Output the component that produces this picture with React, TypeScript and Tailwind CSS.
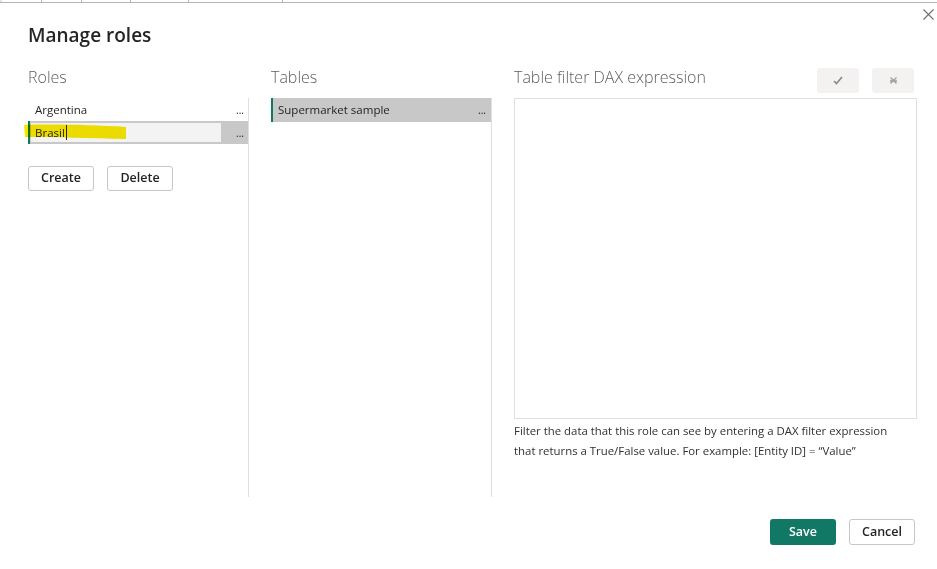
const font = { fontFamily: '"Open Sans", "Noto Sans", sans-serif' }

function Dots() {
  return <span className="text-[10px] leading-none text-[#252423]">...</span>
}

export default function App() {
  return (
    <div style={font} className="relative w-[937px] h-[569px] bg-white overflow-hidden text-[#252423]">
      {/* top strip of the window behind */}
      <div className="flex h-[3px] border-b border-[#b4b4b4] rounded-tl-[4px] border-l">
        <span className="ml-[40px] w-px h-[2px] bg-[#b4b4b4]" />
        <span className="ml-[39px] w-px h-[2px] bg-[#b4b4b4]" />
        <span className="ml-[48px] w-px h-[2px] bg-[#b4b4b4]" />
        <span className="ml-[57px] w-px h-[2px] bg-[#b4b4b4]" />
        <span className="ml-[93px] w-px h-[2px] bg-[#b4b4b4]" />
      </div>

      <button className="absolute top-[9px] right-[3px]">
        <svg width="11" height="11" viewBox="0 0 11 11">
          <path d="M0.5 0.5 L10.5 10.5 M10.5 0.5 L0.5 10.5" stroke="#707070" strokeWidth="1.1" />
        </svg>
      </button>

      <div className="pl-[28px] pr-[20px]">
        <h1 className="mt-[18px] text-[19px] leading-[28px] font-semibold text-[#252423]">Manage roles</h1>

        <div className="mt-[16px] flex">
          {/* Roles */}
          <div className="w-[221px]">
            <div className="h-[28px] text-[16px] leading-[24px] text-[#605e5c] font-light">Roles</div>
            <div className="mt-[5px] h-[399px] border-r border-[#e1dfdd]">
              <div className="h-[23px] flex items-center justify-between pl-[7px] pr-[4px] text-[11.5px]">
                <span>Argentina</span>
                <Dots />
              </div>
              <div className="relative h-[23px] flex items-center justify-between bg-[#c8c8c8] border-l-2 border-[#117865] pl-px pr-[4px] text-[11.5px]">
                <div className="relative w-[190px] h-[19px] bg-[#f3f3f3] flex items-center pl-[4px]">
                  <span className="relative z-10">Brasil</span>
                  <span className="relative z-10 ml-px w-px h-[15px] bg-[#252423]" />
                </div>
                <Dots />
                {/* yellow highlighter annotation */}
                <svg className="absolute left-[-7px] top-[1px] mix-blend-multiply" width="106" height="18" viewBox="0 0 106 18">
                  <path d="M1 3 C 30 2, 70 3, 103 5 L 103 17 C 70 16, 30 15, 2 15 Z" fill="#f7e600" />
                </svg>
              </div>
              <div className="mt-[22px] flex gap-[13px]">
                <button className="w-[66px] h-[25px] bg-white border border-[#c8c6c4] rounded-[3px] text-[12.5px] font-semibold text-[#252423]">Create</button>
                <button className="w-[66px] h-[25px] bg-white border border-[#c8c6c4] rounded-[3px] text-[12.5px] font-semibold text-[#252423]">Delete</button>
              </div>
            </div>
          </div>

          {/* Tables */}
          <div className="ml-[22px] w-[221px]">
            <div className="h-[28px] text-[16px] leading-[24px] text-[#605e5c] font-light">Tables</div>
            <div className="mt-[5px] h-[399px] border-r border-[#e1dfdd]">
              <div className="h-[24px] flex items-center justify-between bg-[#c8c8c8] border-l-2 border-[#117865] pl-[5px] pr-[5px] text-[11.5px]">
                <span>Supermarket sample</span>
                <Dots />
              </div>
            </div>
          </div>

          {/* DAX */}
          <div className="ml-[22px] w-[403px]">
            <div className="h-[28px] flex justify-between">
              <div className="text-[16px] leading-[24px] text-[#605e5c] font-light">Table filter DAX expression</div>
              <div className="mt-[3px] mr-[3px] flex gap-[13px]">
                <button className="w-[42px] h-[25px] bg-[#f3f2f1] rounded-[3px] flex items-center justify-center">
                  <svg width="10" height="9" viewBox="0 0 10 9">
                    <path d="M1 5 L3.5 7.5 L9 1" fill="none" stroke="#8a8886" strokeWidth="1.6" />
                  </svg>
                </button>
                <button className="w-[42px] h-[25px] bg-[#f3f2f1] rounded-[3px] flex items-center justify-center">
                  <svg width="9" height="9" viewBox="0 0 9 9">
                    <path d="M1.5 1.5 L7.5 7.5 M7.5 1.5 L1.5 7.5 M1 5 H8" fill="none" stroke="#a19f9d" strokeWidth="1.3" />
                  </svg>
                </button>
              </div>
            </div>
            <div className="mt-[5px] h-[321px] border border-[#e1dfdd]" />
            <p className="mt-[2px] text-[11.4px] leading-[20px] text-[#323130]">
              Filter the data that this role can see by entering a DAX filter expression<br />
              that returns a True/False value. For example: [Entity ID] = “Value”
            </p>
          </div>
        </div>

        <div className="mt-[22px] pr-[2px] flex justify-end gap-[13px]">
          <button className="w-[66px] h-[26px] bg-[#117865] rounded-[3px] text-[12.5px] font-semibold text-white">Save</button>
          <button className="w-[66px] h-[26px] bg-white border border-[#c8c6c4] rounded-[3px] text-[12.5px] font-semibold text-[#252423]">Cancel</button>
        </div>
      </div>
    </div>
  )
}
